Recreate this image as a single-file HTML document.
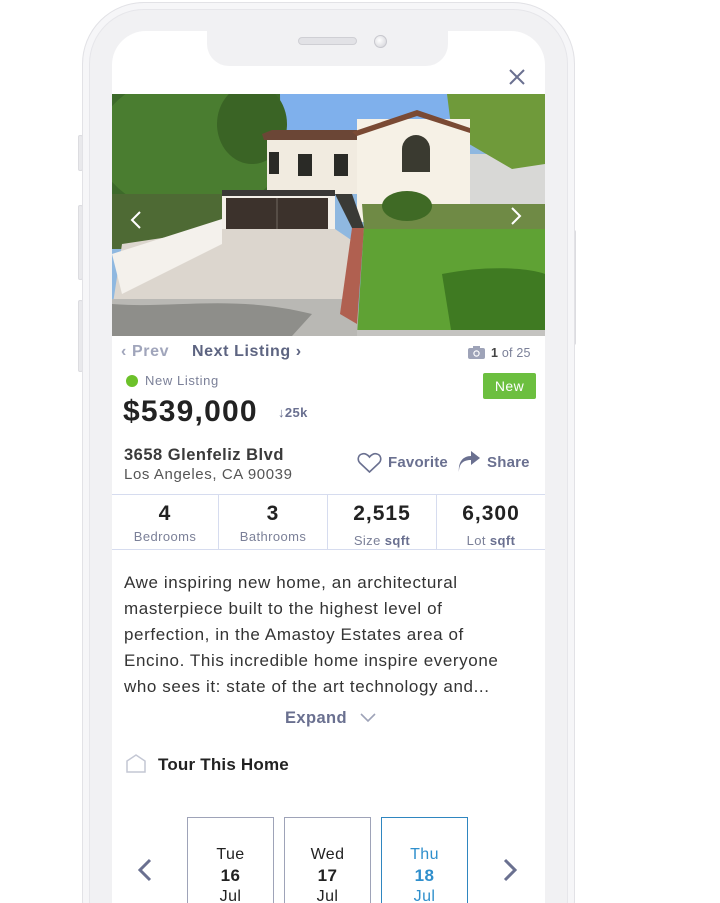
<!DOCTYPE html>
<html style="height:903px;overflow:hidden"><head><meta charset="utf-8"><style>
*{margin:0;padding:0;box-sizing:border-box}
body{width:720px;height:903px;background:#fff;overflow:hidden;font-family:"Liberation Sans",sans-serif;letter-spacing:0.4px}
#w{position:relative;width:720px;height:903px;overflow:hidden}
.abs{position:absolute}
.phone{left:82px;top:2px;width:493px;height:1000px;border-radius:62px;background:#f1f1f3;border:1px solid #e2e2e6;box-shadow:inset 0 0 0 6px #f6f6f8, inset 0 0 0 7px #e6e6ea}
.screen{left:112px;top:31px;width:433px;height:872px;background:#fff;border-radius:34px 34px 0 0}
.notch{left:207px;top:20px;width:241px;height:46px;background:#f1f1f3;border-radius:0 0 22px 22px}
.btn{background:#e9e9ec;border:1px solid #dcdce0}
.t{position:absolute;white-space:nowrap}
.g{color:#6a7090}
.cell{position:absolute;top:494px;height:55px;text-align:center;border-right:1px solid #d6dcef}
.cell b{display:block;font-size:21px;color:#222;margin-top:8px;line-height:24px;letter-spacing:1px}
.cell span{display:block;font-size:13px;color:#7b8098;line-height:16px;margin-top:3px;letter-spacing:0.4px}
.date{position:absolute;top:817px;width:87px;height:86px;border:1px solid #9ea3b8;border-bottom:none;text-align:center;font-size:16px;color:#222;padding-top:26px;line-height:21px}
.date b{display:block;font-size:17px}
</style></head><body><div id="w">
<div class="abs btn" style="left:78px;top:135px;width:5px;height:36px;border-radius:2px"></div>
<div class="abs btn" style="left:78px;top:205px;width:5px;height:75px;border-radius:2px"></div>
<div class="abs btn" style="left:78px;top:300px;width:5px;height:72px;border-radius:2px"></div>
<div class="abs btn" style="left:571px;top:230px;width:5px;height:115px;border-radius:2px"></div>
<div class="abs phone" style="height:960px"></div>
<div class="abs screen"></div>
<div class="abs notch"></div>
<div class="abs" style="left:298px;top:37px;width:59px;height:8px;border-radius:4px;background:#e2e2e6;border:1px solid #cfcfd4"></div>
<div class="abs" style="left:374px;top:35px;width:13px;height:13px;border-radius:50%;background:radial-gradient(circle at 40% 40%,#fff,#d0d0d6);border:1px solid #c8c8ce"></div>
<svg class="abs" style="left:507px;top:67px" width="20" height="20" viewBox="0 0 20 20"><path d="M3 3L17 17M17 3L3 17" stroke="#6a7090" stroke-width="2"/></svg>

<svg class="abs" style="left:112px;top:94px" width="433" height="242" viewBox="0 0 433 242">
<rect width="433" height="242" fill="#8fb8e0"/>
<rect x="150" y="0" width="200" height="60" fill="#7fb0ec"/>
<rect x="330" y="60" width="103" height="110" fill="#d8d8d6"/>
<path d="M0 0H168L170 150H0Z" fill="#3d6a2a"/>
<ellipse cx="80" cy="50" rx="95" ry="70" fill="#4a7d30"/>
<ellipse cx="140" cy="30" rx="35" ry="40" fill="#3a6425"/>
<rect x="0" y="100" width="110" height="55" fill="#4e6a34"/>
<path d="M335 0H433V70L400 75 340 40Z" fill="#6f9a3a"/>
<path d="M155 44H245V100H155Z" fill="#f1ebe0"/>
<path d="M150 40L160 36H245V46H152Z" fill="#6b4636"/>
<path d="M245 25H358V128H245Z" fill="#f6f1e6"/>
<path d="M240 38L305 16L358 34V39L305 22L245 42Z" fill="#7a4a34"/>
<path d="M290 78V55a14 14 0 0 1 28 0V78Z" fill="#3a3a30"/>
<rect x="157" y="58" width="10" height="22" fill="#2a2a26"/>
<rect x="186" y="60" width="14" height="22" fill="#2a2a26"/>
<rect x="222" y="60" width="14" height="22" fill="#2a2a26"/>
<rect x="110" y="96" width="113" height="55" fill="#f3efe8"/>
<rect x="110" y="96" width="113" height="6" fill="#3a3836"/>
<rect x="114" y="104" width="102" height="45" fill="#3c322c"/>
<line x1="165" y1="104" x2="165" y2="149" stroke="#706860"/>
<path d="M10 150L110 135H223L245 150V216H0Z" fill="#dcd6ce"/>
<path d="M0 160L110 125V150L10 200Z" fill="#f4f1ec"/>
<path d="M0 205H245L250 242H0Z" fill="#b9b8b4"/>
<path d="M0 210C60 215 120 200 200 220L180 242H0Z" fill="#8e8e8a"/>
<path d="M228 220L240 134H252L245 230Z" fill="#b06050"/>
<path d="M223 100L240 100 252 134 240 134Z" fill="#3a3a36"/>
<path d="M252 132H433V242H245Z" fill="#5fa234"/>
<path d="M330 180C380 170 420 175 433 180V242H340Z" fill="#3f7a22"/>
<path d="M250 110H433V135H252Z" fill="#6f8a45"/>
<ellipse cx="295" cy="112" rx="25" ry="15" fill="#3f6a25"/>
<path d="M245 236H433V242H245Z" fill="#c4c3c0"/>
<path d="M28 118L20 126L28 134" stroke="#fff" stroke-width="2" fill="none"/>
<path d="M400 114L408 122L400 130" stroke="#fff" stroke-width="2" fill="none"/>
</svg>

<div class="t" style="left:121px;top:343px;font-size:16px;font-weight:bold;color:#a0a5bb;letter-spacing:0.6px">‹ Prev</div>
<div class="t g" style="left:192px;top:343px;font-size:16px;font-weight:bold;color:#5d6481;letter-spacing:0.6px">Next Listing ›</div>
<svg class="abs" style="left:468px;top:346px" width="17" height="13" viewBox="0 0 17 13"><rect x="0" y="2" width="17" height="11" rx="2" fill="#9ea3b8"/><rect x="5" y="0" width="7" height="3" fill="#9ea3b8"/><circle cx="8.5" cy="7.5" r="3.2" fill="#fff"/><circle cx="8.5" cy="7.5" r="2" fill="#9ea3b8"/></svg>
<div class="t" style="left:491px;top:346px;font-size:12.5px;color:#7b8098;letter-spacing:0.2px"><b style="color:#444">1</b> of 25</div>
<div class="abs" style="left:126px;top:375px;width:12px;height:12px;border-radius:50%;background:#6cc12a"></div>
<div class="t" style="left:145px;top:373px;font-size:13px;color:#7b8098;letter-spacing:0.6px">New Listing</div>
<div class="abs" style="left:483px;top:373px;width:53px;height:26px;background:#6cbf3f;border-radius:2px;color:#fff;font-size:14px;text-align:center;line-height:26px">New</div>
<div class="t" style="left:123px;top:395px;font-size:30px;font-weight:bold;color:#222;letter-spacing:1.2px">$539,000</div>
<div class="t" style="left:278px;top:405px;font-size:13px;font-weight:bold;color:#6a7090">↓25k</div>
<div class="t" style="left:124px;top:446px;font-size:16.5px;font-weight:bold;color:#3a3a3a;letter-spacing:0.5px">3658 Glenfeliz Blvd</div>
<div class="t" style="left:124px;top:466px;font-size:15px;color:#555;letter-spacing:0.6px">Los Angeles, CA 90039</div>
<svg class="abs" style="left:357px;top:452px" width="25" height="21" viewBox="0 0 25 21"><path d="M12.5 20L3 11C0 8 1 3 5 2C8 1 11 3 12.5 5C14 3 17 1 20 2C24 3 25 8 22 11Z" fill="none" stroke="#6a7090" stroke-width="1.6"/></svg>
<div class="t g" style="left:388px;top:454px;font-size:15px;font-weight:bold;letter-spacing:0.2px">Favorite</div>
<svg class="abs" style="left:457px;top:451px" width="24" height="22" viewBox="0 0 24 22"><path d="M2 21C2 12 7 9 14 9V14L23 7L14 0V5C6 5 1 11 2 21Z" fill="#6a7090"/></svg>
<div class="t g" style="left:487px;top:454px;font-size:15px;font-weight:bold;letter-spacing:0.2px">Share</div>
<div class="abs" style="left:112px;top:494px;width:433px;height:56px;border-top:1px solid #d6dcef;border-bottom:1px solid #d6dcef"></div>
<div class="cell" style="left:112px;width:107px"><b>4</b><span>Bedrooms</span></div>
<div class="cell" style="left:219px;width:109px"><b>3</b><span>Bathrooms</span></div>
<div class="cell" style="left:328px;width:109px"><b>2,515</b><span>Size <b style="display:inline;font-size:13px;color:#6a7090;letter-spacing:0.4px">sqft</b></span></div>
<div class="cell" style="left:437px;width:108px;border-right:none"><b>6,300</b><span>Lot <b style="display:inline;font-size:13px;color:#6a7090;letter-spacing:0.4px">sqft</b></span></div>
<div class="abs" style="left:124px;top:570px;width:420px;font-size:17px;line-height:26px;color:#333;white-space:nowrap;letter-spacing:0.6px">Awe inspiring new home, an architectural<br>masterpiece built to the highest level of<br>perfection, in the Amastoy Estates area of<br>Encino. This incredible home inspire everyone<br>who sees it: state of the art technology and...</div>
<div class="t g" style="left:285px;top:709px;font-size:16.5px;font-weight:bold;letter-spacing:0.4px">Expand</div>
<svg class="abs" style="left:360px;top:713px" width="16" height="10" viewBox="0 0 16 10"><path d="M1 1L8 8L15 1" stroke="#9ea3b8" stroke-width="1.6" fill="none"/></svg>
<svg class="abs" style="left:126px;top:754px" width="20" height="19" viewBox="0 0 20 19"><path d="M1 7L10 1L19 7V18H1Z" fill="none" stroke="#c4c7d4" stroke-width="1.5"/></svg>
<div class="t" style="left:158px;top:755px;font-size:17px;font-weight:bold;color:#222;letter-spacing:0.2px">Tour This Home</div>
<svg class="abs" style="left:137px;top:858px" width="16" height="24" viewBox="0 0 16 24"><path d="M13 2L3 12L13 22" stroke="#6a7090" stroke-width="3" fill="none"/></svg>
<svg class="abs" style="left:502px;top:858px" width="16" height="24" viewBox="0 0 16 24"><path d="M3 2L13 12L3 22" stroke="#6a7090" stroke-width="3" fill="none"/></svg>
<div class="date" style="left:187px">Tue<b>16</b>Jul</div>
<div class="date" style="left:284px">Wed<b>17</b>Jul</div>
<div class="date" style="left:381px;border-color:#2f86c0;color:#2f8fcc">Thu<b>18</b>Jul</div>
</div></body></html>
